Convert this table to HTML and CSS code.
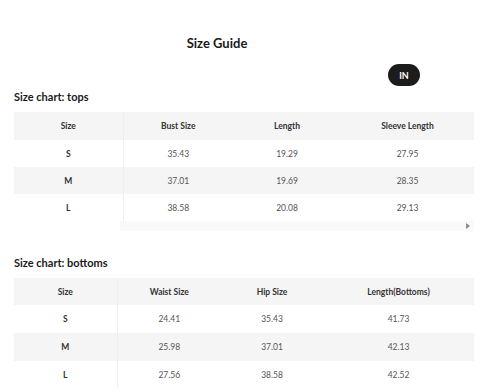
FILE: index.html
```html
<!DOCTYPE html>
<html lang="en">
<head>
    <meta charset="UTF-8">
    <meta name="viewport" content="width=device-width, initial-scale=1.0">
    <title>Size Guide</title>
    <link rel="stylesheet" href="styles.css">
</head>
<body>
    <div class="guide">
        <div class="top">
            <h1 class="title">Size Guide</h1>
            <div class="units">
                <button class="unit active">IN</button>
            </div>
        </div>

        <h2 class="chart-title">Size chart: tops</h2>
        <div class="chart">
            <table class="sizes tops">
                <colgroup><col><col><col><col></colgroup>
                <thead>
                    <tr><th>Size</th><th>Bust Size</th><th>Length</th><th>Sleeve Length</th></tr>
                </thead>
                <tbody>
                    <tr><th>S</th><td>35.43</td><td>19.29</td><td>27.95</td></tr>
                    <tr><th>M</th><td>37.01</td><td>19.69</td><td>28.35</td></tr>
                    <tr><th>L</th><td>38.58</td><td>20.08</td><td>29.13</td></tr>
                </tbody>
            </table>
            <div class="scrollbar"><span class="arrow"></span></div>
        </div>

        <h2 class="chart-title bottoms-title">Size chart: bottoms</h2>
        <div class="chart">
            <table class="sizes bottoms">
                <colgroup><col><col><col><col></colgroup>
                <thead>
                    <tr><th>Size</th><th>Waist Size</th><th>Hip Size</th><th>Length(Bottoms)</th></tr>
                </thead>
                <tbody>
                    <tr><th>S</th><td>24.41</td><td>35.43</td><td>41.73</td></tr>
                    <tr><th>M</th><td>25.98</td><td>37.01</td><td>42.13</td></tr>
                    <tr><th>L</th><td>27.56</td><td>38.58</td><td>42.52</td></tr>
                </tbody>
            </table>
        </div>
    </div>
</body>
</html>
```

FILE: styles.css
```css
body, html {
    margin: 0;
    padding: 0;
    background: #fff;
    font-family: Lato, "Open Sans", sans-serif;
    color: #222;
}
.guide {
    padding: 35px 6px 0 14px;
}
.top {
    width: 406px;
}
.title {
    margin: 0;
    font-size: 13px;
    line-height: 16px;
    font-weight: 700;
    text-align: center;
    color: #1a1a1a;
}
.units {
    display: flex;
    justify-content: flex-end;
    margin-top: 13px;
}
.unit {
    width: 32px;
    height: 22px;
    border: none;
    border-radius: 11px;
    background: #1c1c1c;
    color: #fff;
    font-family: Lato, sans-serif;
    font-size: 9px;
    font-weight: 700;
    padding: 0;
}
.chart-title {
    margin: 5px 0 9px;
    font-size: 11px;
    line-height: 12px;
    font-weight: 700;
    color: #1a1a1a;
}
.bottoms-title {
    margin-top: 26px;
}
.sizes {
    width: 460px;
    border-collapse: collapse;
    table-layout: fixed;
    font-size: 8.5px;
}
.sizes th, .sizes td {
    text-align: center;
    padding: 0;
}
.sizes thead th {
    font-weight: 700;
    color: #333;
    background: #f5f5f5;
}
.sizes tbody th {
    font-weight: 700;
    color: #333;
}
.sizes td {
    color: #555;
}
.sizes tr > :first-child {
    border-right: 1px solid #efefef;
}
.sizes tbody tr:nth-child(2) {
    background: #f5f5f5;
}
.tops thead tr { height: 28px; }
.tops tbody tr { height: 27px; }
.bottoms thead tr { height: 27px; }
.bottoms tbody tr { height: 28px; }
.tops col:nth-child(1) { width: 109px; }
.tops col:nth-child(2) { width: 110px; }
.tops col:nth-child(3) { width: 108px; }
.tops col:nth-child(4) { width: 133px; }
.bottoms col:nth-child(1) { width: 103px; }
.bottoms col:nth-child(2) { width: 104px; }
.bottoms col:nth-child(3) { width: 102px; }
.bottoms col:nth-child(4) { width: 151px; }
.scrollbar {
    display: flex;
    justify-content: flex-end;
    align-items: center;
    width: 354px;
    height: 10px;
    margin-left: 106px;
    background: #f9f9f9;
}
.arrow {
    width: 0;
    height: 0;
    margin-right: 4px;
    border-top: 3px solid transparent;
    border-bottom: 3px solid transparent;
    border-left: 4px solid #8a8a8a;
}
```
